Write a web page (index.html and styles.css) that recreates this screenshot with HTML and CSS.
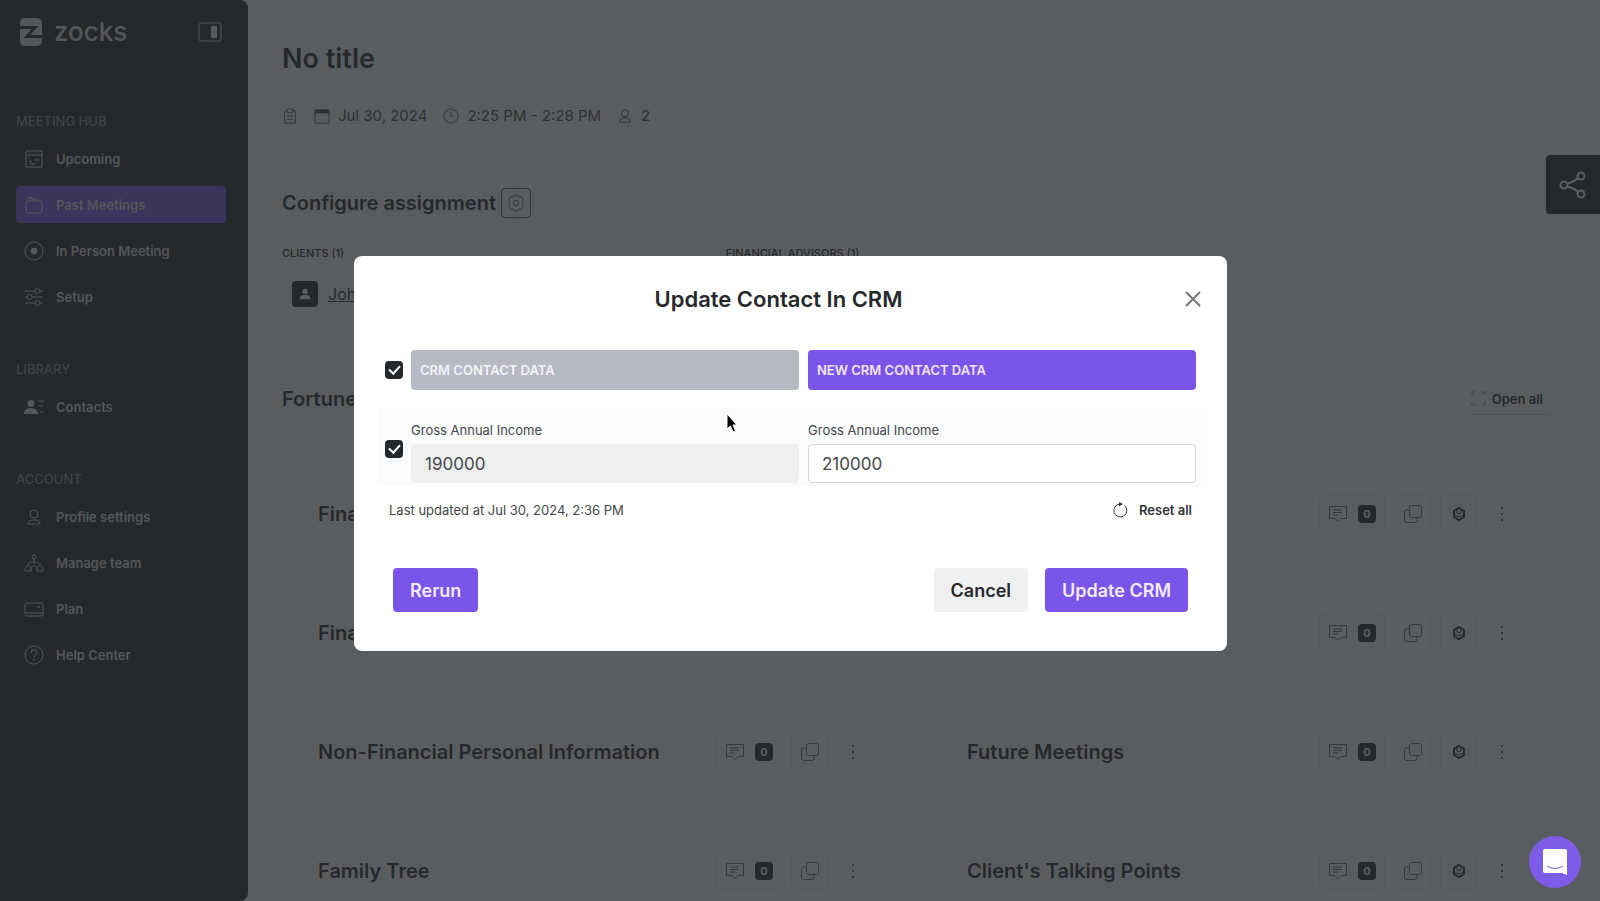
FILE: index.html
```html
<!DOCTYPE html>
<html lang="en">
<head>
    <meta charset="UTF-8">
    <title>Zocks - No title</title>
    <link rel="stylesheet" href="styles.css">
</head>
<body>

    <!-- icons used more than once -->
    <svg class="sprite" aria-hidden="true">
        <symbol id="i-comment" viewBox="0 0 20 20">
            <path d="M1.5 2.5h17v12h-5.5l-3 3-3-3H1.5zM5 6h9M5 8.500h9M5 11h5"/>
        </symbol>
        <symbol id="i-copy" viewBox="0 0 20 20">
            <rect x="6.500" y="1.500" width="12" height="12" rx="2"/>
            <path d="M6.500 6H3.500a2 2 0 0 0-2 2v8.500a2 2 0 0 0 2 2H12a2 2 0 0 0 2-2v-3"/>
        </symbol>
        <symbol id="i-crm" viewBox="0 0 16 16">
            <path d="M8 2l5 3v6l-5 3-5-3V5z" stroke-width="2"/>
            <path d="M4 9q4 3.500 8 0M6 4v3q2 2 4 0V4"/>
        </symbol>
        <symbol id="i-dots" viewBox="0 0 4 16">
            <path d="M1 1h2v2H1zM1 7h2v2H1zM1 13h2v2H1z" fill="currentColor" stroke="none"/>
        </symbol>
    </svg>

    <div class="app">
        <aside class="sidebar">
            <div class="brand">
                <svg class="logo" viewBox="0 0 24 28">
                    <rect x="1" width="22" height="28" rx="5" fill="currentColor" stroke="none"/>
                    <path d="M0 9.500h16L8 18.500h16" stroke="#25292c" stroke-width="3"/>
                </svg>
                <span class="brand-name">zocks</span>
                <button class="collapse" type="button" aria-label="Collapse menu">
                    <svg viewBox="0 0 24 20"><rect x="1" y="1" width="22" height="18" rx="2"/><path d="M13 4h6v12h-6z" fill="currentColor" stroke="none"/></svg>
                </button>
            </div>

            <nav>
                <h2>MEETING HUB</h2>
                <a href="#"><svg viewBox="0 0 20 20"><path d="M2 2h16v16H2zM2 6h16M5 13l3-1M11 11h4M5 15h6"/></svg>Upcoming</a>
                <a href="#" class="active"><svg viewBox="0 0 20 20"><rect x="2" y="6" width="16" height="12" rx="2"/><path d="M5 6V3l2-1 1 2h4l2 2"/></svg>Past Meetings</a>
                <a href="#"><svg viewBox="0 0 20 20"><circle cx="10" cy="10" r="9"/><circle cx="10" cy="10" r="3" fill="currentColor"/></svg>In Person Meeting</a>
                <a href="#"><svg viewBox="0 0 20 20"><path d="M1 4h10M16 4h3M1 10h2M8 10h11M1 16h10M16 16h3"/><circle cx="13.500" cy="4" r="2.500"/><circle cx="5.500" cy="10" r="2.500"/><circle cx="13.500" cy="16" r="2.500"/></svg>Setup</a>

                <h2>LIBRARY</h2>
                <a href="#"><svg viewBox="0 0 20 20"><path d="M7 3a3.500 3.500 0 1 1 0 7 3.500 3.500 0 0 1 0-7zM0 17c0-4 3-6 7-6s7 2 7 6z" fill="currentColor" stroke="none"/><path d="M14 4h6M14 9h5M16 15h4"/></svg>Contacts</a>

                <h2>ACCOUNT</h2>
                <a href="#"><svg viewBox="0 0 20 20"><circle cx="10" cy="7" r="4"/><path d="M4 17c0-3 2-4 6-4s6 1 6 4z"/></svg>Profile settings</a>
                <a href="#"><svg viewBox="0 0 20 20"><circle cx="10" cy="4" r="2"/><path d="M10 6v5M4 12c0-3 2-3 6-3s6 0 6 3M1 18c0-4 1-5 3-5s3 1 3 5zM13 18c0-4 1-5 3-5s3 1 3 5zM7 18c0-4 1-5 3-5s3 1 3 5"/></svg>Manage team</a>
                <a href="#"><svg viewBox="0 0 20 20"><rect x="1" y="4" width="18" height="13" rx="2"/><path d="M1 14h18M13 8h3"/></svg>Plan</a>
                <a href="#"><svg viewBox="0 0 20 20"><circle cx="10" cy="10" r="9"/><path d="M7 8a3 3 0 1 1 4 2.500c-1 .5-1 1-1 2M10 14v1.500"/></svg>Help Center</a>
            </nav>
        </aside>

        <main>
            <h1>No title</h1>
            <div class="meta">
                <svg viewBox="0 0 18 18"><path d="M6 3H3v14h12V3h-3M6 1h6v4H6zM6 9h6M6 13h6"/></svg>
                <span><svg viewBox="0 0 18 18"><rect x="1" y="2" width="16" height="15" rx="1"/><path d="M1 4h16" stroke-width="4"/></svg>Jul 30, 2024</span>
                <span><svg viewBox="0 0 18 18"><circle cx="9" cy="9" r="8"/><path d="M9 4v5h3"/></svg>2:25 PM - 2:28 PM</span>
                <span><svg viewBox="0 0 18 18"><circle cx="9" cy="6" r="4"/><path d="M3 16c0-3 2-5 6-5s6 2 6 5z"/></svg>2</span>
            </div>

            <div class="assign">
                <h3>Configure assignment</h3>
                <button type="button" class="gear" aria-label="Configure">
                    <svg viewBox="0 0 20 20"><circle cx="10" cy="10" r="3"/><path d="M8 1h4l1 2.500 3-.5 2 3.500-1.500 3.500 1.500 3.500-2 3.500-3-.5-1 2.500H8l-1-2.500-3 .5-2-3.500L3.500 10 2 6.500 4 3l3 .5z"/></svg>
                </button>
            </div>

            <div class="roles">
                <div>
                    <h4>CLIENTS (1)</h4>
                    <div class="client">
                        <span class="avatar"><svg viewBox="0 0 16 16"><circle cx="8" cy="5" r="3"/><path d="M2 14c0-4 2-5 6-5s6 1 6 5z"/></svg></span>
                        <a href="#">Joh</a>
                    </div>
                </div>
                <div>
                    <h4>FINANCIAL ADVISORS (1)</h4>
                </div>
            </div>

            <div class="notes-head">
                <h3>Fortune</h3>
                <button type="button" class="open-all">
                    <svg viewBox="0 0 16 16"><path d="M1 5V1h4M11 1h4v4M15 11v4h-4M5 15H1v-4" stroke-dasharray="3 1"/></svg>
                    Open all
                </button>
            </div>

            <div class="notes">
                <div class="note">
                    <h3>Fina</h3>
                </div>
                <div class="note">
                    <div class="tools">
                        <button type="button" class="count"><svg><use href="#i-comment"/></svg><b>0</b></button>
                        <button type="button" aria-label="Copy"><svg><use href="#i-copy"/></svg></button>
                        <button type="button" class="crm" aria-label="CRM"><svg><use href="#i-crm"/></svg></button>
                        <button type="button" class="more" aria-label="More"><svg><use href="#i-dots"/></svg></button>
                    </div>
                </div>

                <div class="note">
                    <h3>Fina</h3>
                </div>
                <div class="note">
                    <div class="tools">
                        <button type="button" class="count"><svg><use href="#i-comment"/></svg><b>0</b></button>
                        <button type="button" aria-label="Copy"><svg><use href="#i-copy"/></svg></button>
                        <button type="button" class="crm" aria-label="CRM"><svg><use href="#i-crm"/></svg></button>
                        <button type="button" class="more" aria-label="More"><svg><use href="#i-dots"/></svg></button>
                    </div>
                </div>

                <div class="note">
                    <h3>Non-Financial Personal Information</h3>
                    <div class="tools">
                        <button type="button" class="count"><svg><use href="#i-comment"/></svg><b>0</b></button>
                        <button type="button" aria-label="Copy"><svg><use href="#i-copy"/></svg></button>
                        <button type="button" class="more" aria-label="More"><svg><use href="#i-dots"/></svg></button>
                    </div>
                </div>
                <div class="note">
                    <h3>Future Meetings</h3>
                    <div class="tools">
                        <button type="button" class="count"><svg><use href="#i-comment"/></svg><b>0</b></button>
                        <button type="button" aria-label="Copy"><svg><use href="#i-copy"/></svg></button>
                        <button type="button" class="crm" aria-label="CRM"><svg><use href="#i-crm"/></svg></button>
                        <button type="button" class="more" aria-label="More"><svg><use href="#i-dots"/></svg></button>
                    </div>
                </div>

                <div class="note">
                    <h3>Family Tree</h3>
                    <div class="tools">
                        <button type="button" class="count"><svg><use href="#i-comment"/></svg><b>0</b></button>
                        <button type="button" aria-label="Copy"><svg><use href="#i-copy"/></svg></button>
                        <button type="button" class="more" aria-label="More"><svg><use href="#i-dots"/></svg></button>
                    </div>
                </div>
                <div class="note">
                    <h3>Client's Talking Points</h3>
                    <div class="tools">
                        <button type="button" class="count"><svg><use href="#i-comment"/></svg><b>0</b></button>
                        <button type="button" aria-label="Copy"><svg><use href="#i-copy"/></svg></button>
                        <button type="button" class="crm" aria-label="CRM"><svg><use href="#i-crm"/></svg></button>
                        <button type="button" class="more" aria-label="More"><svg><use href="#i-dots"/></svg></button>
                    </div>
                </div>
            </div>
        </main>
    </div>

    <button type="button" class="share" aria-label="Share">
        <svg viewBox="0 0 28 28"><circle cx="5" cy="14" r="3.500"/><circle cx="22" cy="5" r="3.500"/><circle cx="22" cy="23" r="3.500"/><path d="M8 12.500q6-1 11-5.500M8 15.500q6 1 11 5.500"/></svg>
    </button>

    <div class="overlay">
        <form class="modal" role="dialog" aria-labelledby="modal-title">
            <div class="modal-head">
                <h2 id="modal-title">Update Contact In CRM</h2>
                <button type="button" class="close" aria-label="Close">
                    <svg viewBox="0 0 16 16"><path d="M1 1l14 14M15 1L1 15"/></svg>
                </button>
            </div>

            <div class="compare">
                <input type="checkbox" aria-label="Select all" checked>
                <div class="col-head">CRM CONTACT DATA</div>
                <div class="col-head new">NEW CRM CONTACT DATA</div>
            </div>

            <div class="compare field-row">
                <input type="checkbox" aria-label="Select Gross Annual Income" checked>
                <div class="field">
                    <label for="old-income">Gross Annual Income</label>
                    <input type="text" id="old-income" value="190000" readonly>
                </div>
                <div class="field">
                    <label for="new-income">Gross Annual Income</label>
                    <input type="text" id="new-income" value="210000">
                </div>
            </div>

            <div class="status">
                <span>Last updated at Jul 30, 2024, 2:36 PM</span>
                <button type="button" class="reset">
                    <svg viewBox="0 0 16 16"><path d="M12.500 3.500A6.500 6.500 0 1 1 8 2"/><path d="M7 0l4 2-4 2.500z" fill="currentColor" stroke="none"/></svg>
                    Reset all
                </button>
            </div>

            <div class="actions">
                <button type="button" class="btn primary">Rerun</button>
                <button type="button" class="btn cancel">Cancel</button>
                <button type="submit" class="btn primary">Update CRM</button>
            </div>

            <svg class="cursor" viewBox="0 0 12 20"><path d="M1 1v15l3.500-3 2.500 6 2.500-1-2.500-6H11z" fill="#000" stroke="#fff"/></svg>
        </form>
    </div>

    <button type="button" class="chat" aria-label="Open chat">
        <svg viewBox="0 0 26 28"><path d="M3 1h20a2 2 0 0 1 2 2v24l-5-2H3a2 2 0 0 1-2-2V3a2 2 0 0 1 2-2z" fill="#fff" stroke="none"/><path d="M5 18q8 5 16 0" stroke="#7f5ce8"/></svg>
    </button>

</body>
</html>
```

FILE: styles.css
```css
*{
    box-sizing: border-box;
}

body{
    margin: 0;
    height: 100vh;
    overflow: hidden;
    background: #f8f8f8;
    color: #25292c;
    font-family: Inter, "Liberation Sans", sans-serif;
    font-size: 14px;
}

h1, h2, h3, h4{
    margin: 0;
    font-weight: 600;
}

a{
    color: inherit;
}

button{
    padding: 0;
    border: 0;
    background: none;
    color: inherit;
    font-family: inherit;
    font-size: 14px;
}

svg{
    flex: none;
    fill: none;
    stroke: currentColor;
}

.sprite{
    display: none;
}

.app{
    display: flex;
}

/* sidebar */

.sidebar{
    flex: none;
    width: 248px;
    height: 100vh;
    padding: 16px 22px 16px 16px;
    border-radius: 0 8px 8px 0;
    background: #25292c;
    color: #ddd;
}

.brand{
    display: flex;
    align-items: center;
    height: 32px;
    padding-left: 2px;
    margin-bottom: 64px;
}

.logo{
    width: 26px;
    height: 28px;
    margin-right: 10px;
}

.brand-name{
    font-size: 26px;
    font-weight: 500;
    line-height: 32px;
}

.collapse{
    margin-left: auto;
    margin-right: 4px;
    height: 20px;
}

.collapse svg{
    width: 24px;
    height: 20px;
}

nav h2{
    height: 18px;
    margin-bottom: 10px;
    font-size: 13px;
    font-weight: 500;
    line-height: 18px;
    color: #8c8f91;
}

nav a + h2{
    margin-top: 45px;
}

nav a{
    display: flex;
    align-items: center;
    gap: 12px;
    height: 37px;
    padding-left: 8px;
    border-radius: 4px;
    font-size: 13px;
    font-weight: 600;
    text-decoration: none;
}

nav a + a{
    margin-top: 9px;
}

nav a.active{
    background: #7c53e8;
}

nav svg{
    width: 20px;
    height: 20px;
}

/* meeting page */

main{
    flex: 1;
    padding: 43px 50px 0 34px;
}

h1{
    font-size: 27px;
    line-height: 32px;
}

h3{
    font-size: 20px;
    line-height: 30px;
}

.meta{
    display: flex;
    align-items: center;
    gap: 16px;
    margin-top: 29px;
    color: #44484b;
    font-size: 15px;
    line-height: 24px;
}

.meta span{
    display: flex;
    align-items: center;
    gap: 8px;
}

.meta svg{
    width: 16px;
    height: 16px;
}

.assign{
    display: flex;
    align-items: center;
    gap: 5px;
    margin-top: 60px;
}

.gear{
    display: grid;
    place-items: center;
    width: 30px;
    height: 30px;
    border: 1px solid #55595c;
    border-radius: 4px;
}

.gear svg{
    width: 18px;
    height: 18px;
    stroke: #55595c;
}

.roles{
    display: grid;
    grid-template-columns: 35% 1fr;
    margin-top: 26px;
}

h4{
    font-size: 11px;
    font-weight: 500;
    line-height: 18px;
}

.client{
    display: flex;
    align-items: center;
    gap: 10px;
    margin: 19px 0 0 10px;
    font-size: 16px;
    line-height: 26px;
}

.avatar{
    display: grid;
    place-items: center;
    width: 26px;
    height: 26px;
    border-radius: 4px;
    background: #25292c;
}

.avatar svg{
    width: 14px;
    height: 14px;
    fill: #fff;
    stroke: none;
}

.notes-head{
    display: flex;
    align-items: center;
    justify-content: space-between;
    margin-top: 76px;
}

.open-all{
    display: flex;
    align-items: center;
    gap: 6px;
    height: 32px;
    padding: 0 7px 0 2px;
    border-bottom: 1px solid #ccc;
    font-size: 13px;
    font-weight: 600;
}

.open-all svg{
    width: 15px;
    height: 15px;
    stroke: #777;
}

.notes{
    display: grid;
    grid-template-columns: 1fr 1fr;
    column-gap: 106px;
    margin-top: 39px;
    padding: 0 40px 0 36px;
}

.note{
    display: flex;
    align-items: center;
    justify-content: space-between;
    height: 119px;
}

.tools{
    display: flex;
    align-items: center;
    gap: 9px;
    margin-left: auto;
}

.tools button{
    display: flex;
    align-items: center;
    justify-content: center;
    gap: 10px;
    width: 37px;
    height: 37px;
    border: 1px solid #e2e2e2;
    border-radius: 4px;
}

.tools .count{
    width: 66px;
}

.tools svg{
    width: 20px;
    height: 20px;
    color: #66696b;
}

.tools .crm svg{
    width: 16px;
    height: 16px;
    color: #25292c;
}

.tools .more{
    width: 16px;
    margin-left: 8px;
    border: 0;
}

.tools .more svg{
    width: 4px;
    height: 16px;
}

.tools b{
    width: 18px;
    border-radius: 4px;
    background: #25292c;
    color: #fff;
    font-size: 11px;
    line-height: 18px;
}

.share{
    display: grid;
    place-items: center;
    position: fixed;
    top: 155px;
    right: 0;
    width: 54px;
    height: 59px;
    border-radius: 4px 0 0 4px;
    background: #25292c;
    color: #fff;
}

.share svg{
    width: 28px;
    height: 28px;
    stroke-width: 2;
}

/* modal */

.overlay{
    display: flex;
    align-items: center;
    justify-content: center;
    position: fixed;
    inset: 0;
    padding: 6px 19px 0 0;
    background: rgba(37, 41, 44, .75);
}

.modal{
    position: relative;
    width: 90%;
    max-width: 873px;
    padding: 27px 23px 39px;
    border-radius: 8px;
    background: #fff;
}

.modal-head{
    display: flex;
    align-items: center;
    padding-right: 3px;
    margin-bottom: 35px;
}

.modal-head h2{
    flex: 1;
    padding-right: 5px;
    font-size: 22px;
    line-height: 32px;
    text-align: center;
}

.close{
    height: 16px;
    color: #777;
}

.close svg{
    width: 16px;
    height: 16px;
    stroke-width: 2;
}

.compare{
    display: grid;
    grid-template-columns: 17px 1fr 1fr;
    align-items: center;
    gap: 9px;
    padding: 0 8px;
}

.compare input[type=checkbox]{
    display: grid;
    place-items: center;
    appearance: none;
    width: 18px;
    height: 18px;
    margin: 0;
    border-radius: 4px;
    background: #25282b;
}

.compare input[type=checkbox]::after{
    content: "";
    width: 9px;
    height: 5px;
    margin-bottom: 3px;
    border: solid #fff;
    border-width: 0 0 2px 2px;
    transform: rotate(-48deg);
}

.col-head{
    padding: 0 9px;
    border-radius: 4px;
    background: #b6bac5;
    color: #f3f3f8;
    font-size: 13px;
    font-weight: 600;
    line-height: 40px;
}

.col-head.new{
    background: #7b54ea;
    color: #f0e6ff;
}

.field-row{
    margin-top: 18px;
    padding-top: 12px;
    padding-bottom: 3px;
    background: #fafbfc;
}

.field-row input[type=checkbox]{
    margin-bottom: 5px;
}

.field label{
    display: block;
    margin-bottom: 4px;
    color: #444749;
    font-size: 13px;
    line-height: 20px;
}

.field input{
    display: block;
    width: 100%;
    height: 39px;
    padding: 0 13px;
    border: 1px solid #d3d5d6;
    border-radius: 4px;
    background: #fff;
    color: #444749;
    font-family: inherit;
    font-size: 17px;
}

.field input[readonly]{
    border-color: #eeeff1;
    background: #eeeff1;
}

.status{
    display: flex;
    align-items: center;
    justify-content: space-between;
    margin-top: 14px;
    padding: 0 12px;
    color: #444749;
    font-size: 13px;
    line-height: 20px;
}

.reset{
    display: flex;
    align-items: center;
    gap: 11px;
    color: #333638;
    font-size: 13px;
    font-weight: 600;
}

.reset svg{
    width: 16px;
    height: 16px;
}

.actions{
    display: flex;
    gap: 17px;
    margin-top: 48px;
    padding: 0 16px;
}

.btn{
    height: 44px;
    padding: 0 17px;
    border-radius: 4px;
    font-size: 18px;
    font-weight: 600;
}

.primary{
    background: #7b54ea;
    color: #f3ebff;
}

.cancel{
    margin-left: auto;
    background: #eff0f1;
}

.cursor{
    position: absolute;
    top: 157px;
    left: 372px;
    width: 12px;
    height: 20px;
}

.chat{
    display: grid;
    place-items: center;
    position: fixed;
    right: 19px;
    bottom: 13px;
    width: 52px;
    height: 52px;
    border-radius: 50%;
    background: #7f5ce8;
}

.chat svg{
    width: 26px;
    height: 28px;
}
```
